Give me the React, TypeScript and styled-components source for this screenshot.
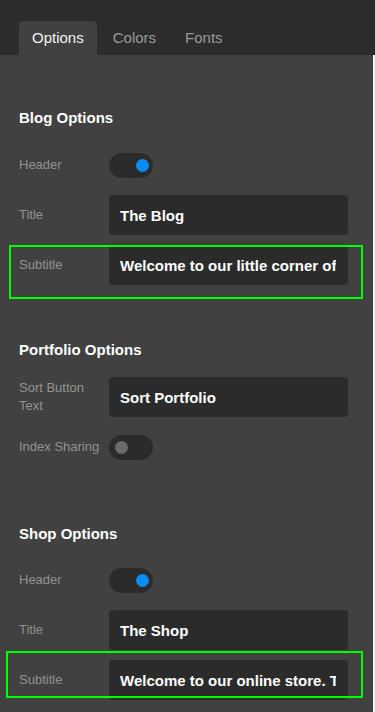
import React from "react";
import styled, { createGlobalStyle } from "styled-components";

const GlobalStyle = createGlobalStyle`
    html, body {
        margin: 0;
        padding: 0;
        background: #f4f4f4;
    }
    * {
        box-sizing: border-box;
    }
`;

const Page = styled.div`
    width: 375px;
    height: 712px;
    overflow: hidden;
    font-family: "Liberation Sans", Arial, sans-serif;
`;

const TabBar = styled.div`
    display: flex;
    align-items: flex-end;
    height: 55px;
    padding-left: 19px;
    background: #2c2c2c;
`;

const Tab = styled.div<{ $active?: boolean }>`
    height: 34px;
    padding: 0 13px 2px;
    margin-right: 3px;
    display: flex;
    align-items: center;
    font-size: 15px;
    border-radius: 4px 4px 0 0;
    color: ${p => (p.$active ? "#f2f2f2" : "#9a9a9a")};
    background: ${p => (p.$active ? "#414141" : "transparent")};
`;

const Panel = styled.div`
    width: 373px;
    height: 657px;
    background: #414141;
    padding: 53px 0 0 0;
`;

const Section = styled.div<{ $gap?: number }>`
    padding-bottom: ${p => p.$gap ?? 50}px;
`;

const SectionTitle = styled.div<{ $space?: number }>`
    height: 20px;
    line-height: 20px;
    margin: 0 0 ${p => p.$space ?? 12}px 19px;
    font-size: 15px;
    font-weight: bold;
    color: #ffffff;
`;

const Row = styled.div<{ $hl?: [number, number, number, number] }>`
    position: relative;
    display: flex;
    align-items: center;
    height: 50px;
    padding: 0 25px 0 19px;

    ${p =>
        p.$hl &&
        `
        &::after {
            content: "";
            position: absolute;
            top: ${p.$hl[0]}px;
            left: ${p.$hl[1]}px;
            right: ${p.$hl[2]}px;
            bottom: ${p.$hl[3]}px;
            border: 2px solid #00ff00;
            pointer-events: none;
        }
    `}
`;

const Label = styled.div`
    width: 90px;
    flex-shrink: 0;
    padding-right: 8px;
    font-size: 13px;
    line-height: 18px;
    color: #929292;
`;

const TextInput = styled.input`
    flex: 1;
    min-width: 0;
    height: 40px;
    padding: 0 12px 0 11px;
    border: none;
    border-radius: 4px;
    outline: none;
    background: #2b2b2b;
    color: #ffffff;
    font-family: "Liberation Sans", Arial, sans-serif;
    font-size: 15px;
    font-weight: bold;
`;

const Toggle = styled.div<{ $on?: boolean }>`
    width: 44px;
    height: 25px;
    border-radius: 13px;
    background: #2b2b2b;
    display: flex;
    align-items: center;
    justify-content: ${p => (p.$on ? "flex-end" : "flex-start")};
    padding: 0 4px 0 6px;
`;

const Knob = styled.div<{ $on?: boolean }>`
    width: 13px;
    height: 13px;
    border-radius: 50%;
    background: ${p => (p.$on ? "#0b8cf3" : "#6a6a6a")};
`;

function ToggleRow({ label, on }: { label: string; on?: boolean }) {
    return (
        <Row>
            <Label>{label}</Label>
            <Toggle $on={on}>
                <Knob $on={on} />
            </Toggle>
        </Row>
    );
}

function InputRow({ label, value, hl }: { label: string; value: string; hl?: [number, number, number, number] }) {
    return (
        <Row $hl={hl}>
            <Label>{label}</Label>
            <TextInput defaultValue={value} readOnly />
        </Row>
    );
}

export default function App() {
    return (
        <Page>
            <GlobalStyle />
            <TabBar>
                <Tab $active>Options</Tab>
                <Tab>Colors</Tab>
                <Tab>Fonts</Tab>
            </TabBar>
            <Panel>
                <Section>
                    <SectionTitle>Blog Options</SectionTitle>
                    <ToggleRow label="Header" on />
                    <InputRow label="Title" value="The Blog" />
                    <InputRow label="Subtitle" value="Welcome to our little corner of the internet" hl={[5, 9, 10, -9]} />
                </Section>
                <Section $gap={52}>
                    <SectionTitle>Portfolio Options</SectionTitle>
                    <InputRow label="Sort Button Text" value="Sort Portfolio" />
                    <ToggleRow label="Index Sharing" />
                </Section>
                <Section>
                    <SectionTitle $space={11}>Shop Options</SectionTitle>
                    <ToggleRow label="Header" on />
                    <InputRow label="Title" value="The Shop" />
                    <InputRow label="Subtitle" value="Welcome to our online store. Take a look around" hl={[-4, 6, 10, 7]} />
                </Section>
            </Panel>
        </Page>
    );
}
